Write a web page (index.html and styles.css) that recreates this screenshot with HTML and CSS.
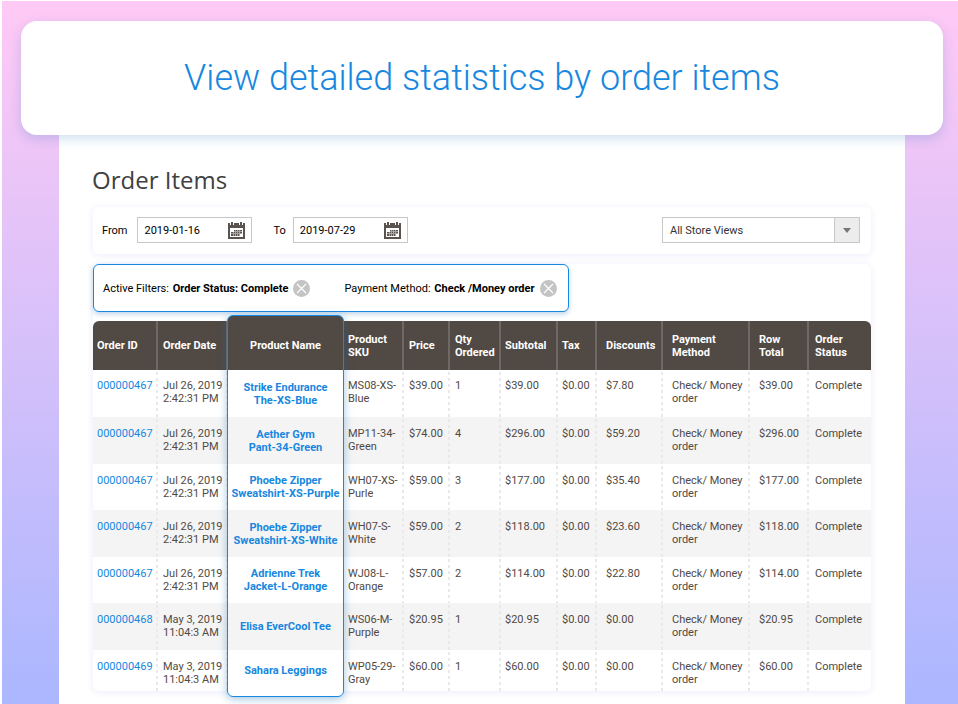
FILE: index.html
```html
<!DOCTYPE html>
<html lang="en">
<head>
<meta charset="utf-8">
<title>Order Items</title>
<link rel="stylesheet" href="styles.css">
</head>
<body>
<svg class="sprite" aria-hidden="true">
  <symbol id="calendar" viewBox="0 0 17 17">
    <path fill="#5a534e" d="M0 1h17v16H0z"/>
    <path fill="#fff" d="M2 6h13v9H2z"/>
    <path fill="#fff" d="M2 0h4v3H2zM11 0h4v3h-4z"/>
    <path fill="#5a534e" d="M3 0h2v3H3zM12 0h2v3h-2z"/>
    <path fill="#a9a5a2" d="M6 8h8v3H6zM3 10h11v2H3zM3 11h9v3H3z"/>
    <path fill="#5a534e" d="M6 8h1v1H6zM8 8h1v1H8zM10 8h1v1h-1zM12 8h2v1h-2zM3 10h2v1H3zM6 10h1v1H6zM8 10h1v1H8zM10 10h1v1h-1zM12 10h2v1h-2zM3 12h2v2H3zM6 12h1v2H6zM8 12h1v2H8zM10 12h1v2h-1z"/>
  </symbol>
  <symbol id="remove" viewBox="0 0 17 17">
    <circle cx="8.500" cy="8.500" r="8.500" fill="#c4c4c4"/>
    <path d="M4 4l9 9M13 4l-9 9" stroke="#fff" stroke-width="1.200" fill="none"/>
  </symbol>
</svg>
<main class="stage">
  <header class="banner"><h1>View detailed statistics by order items</h1></header>
  <section class="page">
    <h2>Order Items</h2>
    <form class="toolbar">
      <label for="from">From</label>
      <div class="date">
        <input id="from" type="text" value="2019-01-16">
        <button type="button" aria-label="Choose start date"><svg><use href="#calendar"/></svg></button>
      </div>
      <label class="to" for="to">To</label>
      <div class="date">
        <input id="to" type="text" value="2019-07-29">
        <button type="button" aria-label="Choose end date"><svg><use href="#calendar"/></svg></button>
      </div>
      <div class="store">
        <select aria-label="Store view"><option>All Store Views</option></select>
        <span class="arrow"><svg viewBox="0 0 8 5"><path d="M0 0h8L4 5z" fill="#777"/></svg></span>
      </div>
    </form>
    <div class="report">
      <div class="filters">
        <span class="filter">Active Filters: <b>Order Status: Complete</b></span>
        <button type="button" aria-label="Remove order status filter"><svg><use href="#remove"/></svg></button>
        <span class="filter second">Payment Method: <b>Check /Money order</b></span>
        <button type="button" aria-label="Remove payment method filter"><svg><use href="#remove"/></svg></button>
      </div>
      <div class="grid">
        <table>
          <colgroup>
            <col class="c-id"><col class="c-date"><col class="c-name"><col class="c-sku"><col class="c-price"><col class="c-qty"><col class="c-sub"><col class="c-tax"><col class="c-disc"><col class="c-pay"><col class="c-total"><col class="c-status">
          </colgroup>
          <thead>
            <tr><th class="tight">Order ID</th><th>Order Date</th><th class="name">Product Name</th><th class="tight">Product<br>SKU</th><th>Price</th><th>Qty<br>Ordered</th><th class="tight">Subtotal</th><th class="tight">Tax</th><th class="wide">Discounts</th><th class="wide">Payment<br>Method</th><th class="wide">Row<br>Total</th><th class="last">Order<br>Status</th></tr>
          </thead>
          <tbody>
            <tr><td class="tight"><a href="#">000000467</a></td><td>Jul 26, 2019<br>2:42:31 PM</td><td class="name"><a href="#">Strike Endurance<br>The-XS-Blue</a></td><td class="tight">MS08-XS-<br>Blue</td><td>$39.00</td><td>1</td><td class="tight">$39.00</td><td class="tight">$0.00</td><td class="wide">$7.80</td><td class="wide">Check/ Money<br>order</td><td class="wide">$39.00</td><td class="last">Complete</td></tr>
            <tr><td class="tight"><a href="#">000000467</a></td><td>Jul 26, 2019<br>2:42:31 PM</td><td class="name"><a href="#">Aether Gym<br>Pant-34-Green</a></td><td class="tight">MP11-34-<br>Green</td><td>$74.00</td><td>4</td><td class="tight">$296.00</td><td class="tight">$0.00</td><td class="wide">$59.20</td><td class="wide">Check/ Money<br>order</td><td class="wide">$296.00</td><td class="last">Complete</td></tr>
            <tr><td class="tight"><a href="#">000000467</a></td><td>Jul 26, 2019<br>2:42:31 PM</td><td class="name"><a href="#">Phoebe Zipper<br>Sweatshirt-XS-Purple</a></td><td class="tight">WH07-XS-<br>Purle</td><td>$59.00</td><td>3</td><td class="tight">$177.00</td><td class="tight">$0.00</td><td class="wide">$35.40</td><td class="wide">Check/ Money<br>order</td><td class="wide">$177.00</td><td class="last">Complete</td></tr>
            <tr><td class="tight"><a href="#">000000467</a></td><td>Jul 26, 2019<br>2:42:31 PM</td><td class="name"><a href="#">Phoebe Zipper<br>Sweatshirt-XS-White</a></td><td class="tight">WH07-S-<br>White</td><td>$59.00</td><td>2</td><td class="tight">$118.00</td><td class="tight">$0.00</td><td class="wide">$23.60</td><td class="wide">Check/ Money<br>order</td><td class="wide">$118.00</td><td class="last">Complete</td></tr>
            <tr><td class="tight"><a href="#">000000467</a></td><td>Jul 26, 2019<br>2:42:31 PM</td><td class="name"><a href="#">Adrienne Trek<br>Jacket-L-Orange</a></td><td class="tight">WJ08-L-<br>Orange</td><td>$57.00</td><td>2</td><td class="tight">$114.00</td><td class="tight">$0.00</td><td class="wide">$22.80</td><td class="wide">Check/ Money<br>order</td><td class="wide">$114.00</td><td class="last">Complete</td></tr>
            <tr><td class="tight"><a href="#">000000468</a></td><td>May 3, 2019<br>11:04:3 AM</td><td class="name"><a href="#">Elisa EverCool Tee</a></td><td class="tight">WS06-M-<br>Purple</td><td>$20.95</td><td>1</td><td class="tight">$20.95</td><td class="tight">$0.00</td><td class="wide">$0.00</td><td class="wide">Check/ Money<br>order</td><td class="wide">$20.95</td><td class="last">Complete</td></tr>
            <tr><td class="tight"><a href="#">000000469</a></td><td>May 3, 2019<br>11:04:3 AM</td><td class="name"><a href="#">Sahara Leggings</a></td><td class="tight">WP05-29-<br>Gray</td><td>$60.00</td><td>1</td><td class="tight">$60.00</td><td class="tight">$0.00</td><td class="wide">$0.00</td><td class="wide">Check/ Money<br>order</td><td class="wide">$60.00</td><td class="last">Complete</td></tr>
          </tbody>
        </table>
        <div class="highlight"></div>
      </div>
    </div>
  </section>
</main>
</body>
</html>
```
FILE: styles.css
```css
* { box-sizing: border-box; }
body {
  margin: 0;
  padding: 1px 0 0 2px;
  background: #fff;
  color: #000;
  font: 11px/13px Roboto, "Liberation Sans", sans-serif;
}
.sprite { display: none; }
button {
  display: block;
  padding: 0;
  border: 0;
  background: none;
  cursor: pointer;
}
a { color: #1787e0; text-decoration: none; }
.stage {
  display: flex;
  flex-direction: column;
  min-height: calc(100vh - 1px);
  padding: 20px 15px 0 19px;
  background: linear-gradient(#ffc9f5, #abb7ff);
}
.banner {
  position: relative;
  z-index: 1;
  display: flex;
  align-items: center;
  justify-content: center;
  height: 114px;
  border-radius: 16px;
  background: #fff;
  box-shadow: 0 4px 12px rgba(23, 110, 180, 0.2);
}
h1 {
  margin: 0;
  color: #1787e0;
  font-size: 36px;
  font-weight: 300;
  line-height: 44px;
}
.page {
  flex: 1;
  margin: 0 38px;
  padding: 28px 34px 6px 33px;
  background: #fff;
}
h2 {
  margin: 0 0 11px;
  color: #41403f;
  font: 400 24px/33px "Open Sans", sans-serif;
}
.toolbar {
  display: flex;
  align-items: center;
  height: 47px;
  margin: 0 0 10px 1px;
  padding: 0 11px 1px 9px;
  border-radius: 6px;
  box-shadow: 0 1px 7px rgba(90, 90, 230, 0.12);
}
.toolbar label { margin-right: 10px; }
.toolbar .to { margin-left: 21px; margin-right: 7px; }
.date {
  display: flex;
  align-items: center;
  width: 115px;
  height: 26px;
  padding-right: 6px;
  border: 1px solid #c8c8c8;
}
.date input {
  flex: 1;
  min-width: 0;
  padding: 0 0 0 6px;
  border: 0;
  background: none;
  color: inherit;
  font: inherit;
}
.date svg, .filters svg { display: block; width: 17px; height: 17px; }
.store {
  display: flex;
  width: 198px;
  height: 26px;
  margin-left: auto;
  border: 1px solid #c8c8c8;
}
.store select {
  flex: 1;
  padding: 0 0 0 7px;
  border: 0;
  background: none;
  color: #333;
  font: inherit;
  appearance: none;
}
.arrow {
  display: flex;
  align-items: center;
  justify-content: center;
  width: 25px;
  border-left: 1px solid #c8c8c8;
  background: #ececec;
}
.arrow svg { width: 8px; height: 5px; }
.report {
  margin-left: 1px;
  border-radius: 6px;
  box-shadow: 0 1px 7px rgba(90, 90, 230, 0.12);
}
.filters {
  display: flex;
  align-items: center;
  width: fit-content;
  height: 48px;
  margin-bottom: 9px;
  padding: 0 11px 0 9px;
  border: 1px solid #1787e0;
  border-radius: 6px;
  background: #fff;
  box-shadow: 0 2px 5px rgba(23, 110, 180, 0.3);
}
.filter { margin-right: 5px; }
.filter b { margin-left: 1px; }
.second { margin-left: 34px; }
.grid { position: relative; }
table {
  width: 100%;
  border-spacing: 0;
  table-layout: fixed;
  color: #514943;
}
.c-id { width: 65px; }
.c-date { width: 70px; }
.c-name { width: 116px; }
.c-sku { width: 60px; }
.c-price { width: 46px; }
.c-qty { width: 51px; }
.c-sub { width: 57px; }
.c-tax { width: 39px; }
.c-disc { width: 66px; }
.c-pay { width: 87px; }
.c-total { width: 59px; }
.c-status { width: 62px; }
th {
  height: 49px;
  padding: 0 0 0 5px;
  border-right: 2px solid #6f6864;
  background: #514943;
  color: #fff;
  font-weight: 700;
  text-align: left;
  white-space: nowrap;
}
th:first-child { border-top-left-radius: 6px; }
th.last { border-right: 0; border-top-right-radius: 6px; }
td {
  height: 46px;
  padding: 10px 0 0 5px;
  background: repeating-linear-gradient(transparent 0 2px, #e9e9e9 2px 5px, transparent 5px 6px) right / 2px 100% no-repeat;
  vertical-align: top;
  white-space: nowrap;
}
tr:first-child td { padding-top: 9px; }
.tight { padding-left: 4px; }
.wide { padding-left: 9px; }
.last { padding-left: 6px; }
td.last { background: none; }
tr:nth-child(even) td, tr:first-child td { height: 47px; }
tr:last-child td { height: 41px; }
tbody tr:nth-child(even) { background: #f4f4f4; }
th.name, tbody tr td.name {
  padding: 0 1px 0 0;
  border: 0;
  background-image: none;
  font-weight: 700;
  text-align: center;
  vertical-align: middle;
}
/* Frame that lifts the product column above the rest of the table. */
.highlight {
  position: absolute;
  top: -6px;
  bottom: -6px;
  left: calc(100% * 134 / 778);
  width: calc(100% * 117 / 778);
  border: 1px solid #1787e0;
  border-radius: 6px;
  background:
    linear-gradient(#514943, #514943) top / 100% 6px no-repeat,
    linear-gradient(#fff, #fff) bottom / 100% 5px no-repeat;
  box-shadow: 0 2px 8px rgba(23, 110, 180, 0.4);
  pointer-events: none;
}
```
